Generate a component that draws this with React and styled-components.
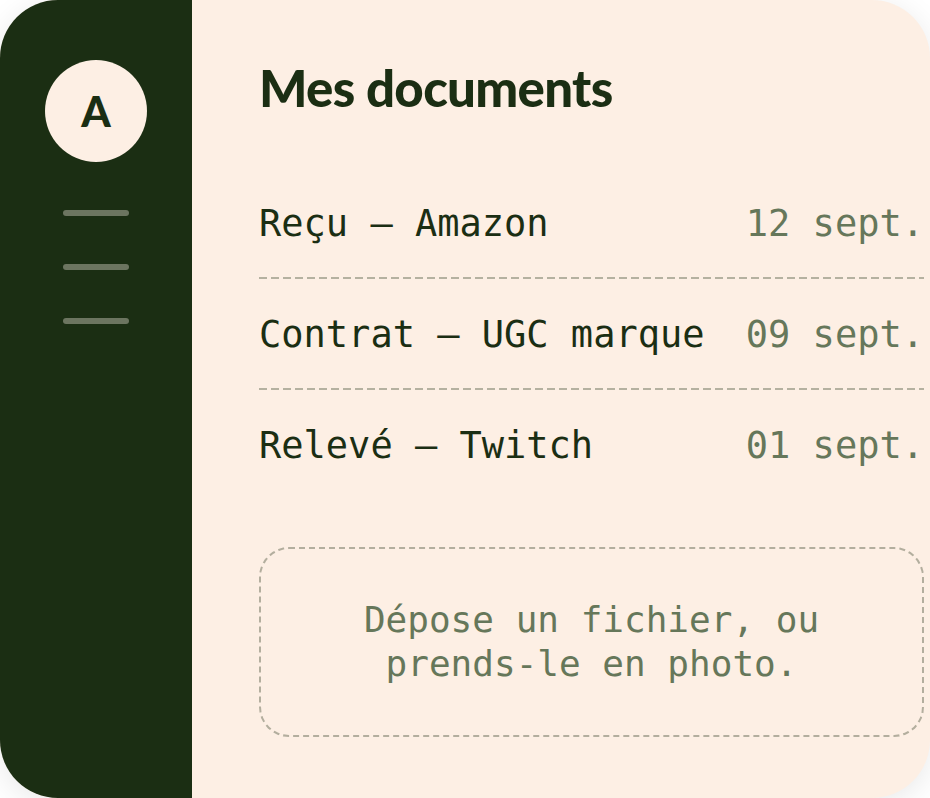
import React from "react";
import styled, { createGlobalStyle } from "styled-components";

const GlobalStyle = createGlobalStyle`
  html, body {
    margin: 0;
    padding: 0;
    background: #ffffff;
  }
  * { box-sizing: border-box; }
`;

const Card = styled.div`
  display: flex;
  width: 930px;
  height: 798px;
  border-radius: 58px;
  overflow: hidden;
  background: #fdefe4;
  box-shadow: 0 6px 30px rgba(0, 0, 0, 0.09);
`;

const Sidebar = styled.aside`
  width: 192px;
  flex-shrink: 0;
  background: #1b2e13;
  display: flex;
  flex-direction: column;
  align-items: center;
  padding-top: 60px;
  gap: 48px;
`;

const Avatar = styled.div`
  width: 102px;
  height: 102px;
  border-radius: 50%;
  background: #fdefe4;
  color: #1b2e13;
  display: flex;
  align-items: center;
  justify-content: center;
  font-family: Lato, "Noto Sans", sans-serif;
  font-weight: 900;
  font-size: 42px;
  line-height: 1;
`;

const MenuLine = styled.div`
  width: 66px;
  height: 6px;
  border-radius: 3px;
  background: #6c7560;
`;

const Main = styled.main`
  flex: 1;
  padding: 58px 6px 0 67px;
  display: flex;
  flex-direction: column;
  min-width: 0;
`;

const Title = styled.h1`
  margin: 0;
  font-family: Lato, "Noto Sans", sans-serif;
  font-weight: 900;
  font-size: 51px;
  line-height: 60px;
  letter-spacing: -0.7px;
  color: #1b2e13;
`;

const List = styled.div`
  margin-top: 50px;
  display: flex;
  flex-direction: column;
`;

const Row = styled.div`
  position: relative;
  display: flex;
  justify-content: space-between;
  align-items: baseline;
  padding: 34px 0 33px;
  font-family: "DejaVu Sans Mono", "Liberation Mono", monospace;
  font-size: 37px;
  line-height: 44px;
  white-space: nowrap;

  &::after {
    content: "";
    position: absolute;
    left: 0;
    right: 0;
    bottom: 0;
    height: 2px;
    background: repeating-linear-gradient(
      to right,
      #b5b1a0 0 8px,
      transparent 8px 12px
    );
  }

  &:last-child::after { display: none; }
`;

const Name = styled.span`
  color: #1b2e13;
`;

const DateText = styled.span`
  color: #66775a;
`;

const DropZone = styled.div`
  margin-top: 46px;
  height: 190px;
  border: 2px dashed #b3ae9e;
  border-radius: 30px;
  display: flex;
  align-items: center;
  justify-content: center;
  text-align: center;
  font-family: "DejaVu Sans Mono", "Liberation Mono", monospace;
  font-size: 36px;
  line-height: 44px;
  color: #66775a;
`;

const docs = [
  { name: "Reçu — Amazon", date: "12 sept." },
  { name: "Contrat — UGC marque", date: "09 sept." },
  { name: "Relevé — Twitch", date: "01 sept." },
];

export default function App() {
  return (
    <>
      <GlobalStyle />
      <Card>
        <Sidebar>
          <Avatar>A</Avatar>
          <MenuLine />
          <MenuLine />
          <MenuLine />
        </Sidebar>
        <Main>
          <Title>Mes documents</Title>
          <List>
            {docs.map((d) => (
              <Row key={d.name}>
                <Name>{d.name}</Name>
                <DateText>{d.date}</DateText>
              </Row>
            ))}
          </List>
          <DropZone>
            Dépose un fichier, ou
            <br />
            prends-le en photo.
          </DropZone>
        </Main>
      </Card>
    </>
  );
}
